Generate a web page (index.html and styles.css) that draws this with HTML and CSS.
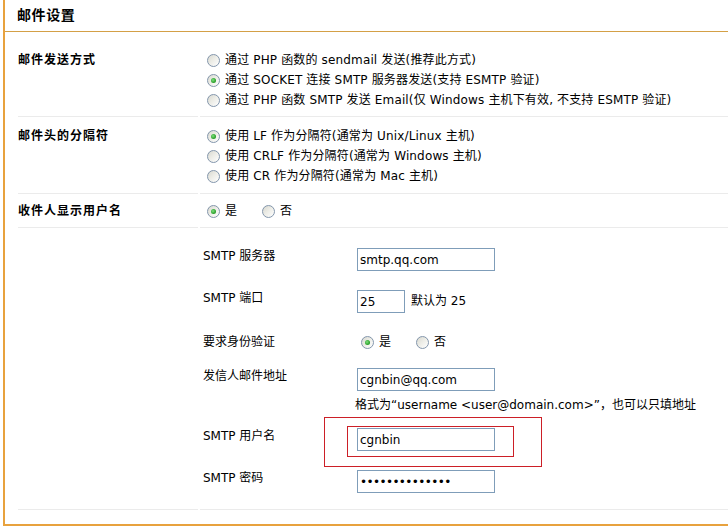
FILE: index.html
```html
<!DOCTYPE html>
<html lang="zh-CN">
<head>
<meta charset="utf-8">
<title>邮件设置</title>
<link rel="stylesheet" href="styles.css">
</head>
<body>
<div class="panel">
  <div class="panel-head">邮件设置</div>
  <div class="form">
    <div class="row row-1">
      <div class="lbl">邮件发送方式</div>
      <div class="ctl">
        <div class="opt wide"><span class="radio"></span>通过 PHP 函数的 sendmail 发送(推荐此方式)</div>
        <div class="opt wide"><span class="radio checked"></span>通过 SOCKET 连接 SMTP 服务器发送(支持 ESMTP 验证)</div>
        <div class="opt wide"><span class="radio"></span>通过 PHP 函数 SMTP 发送 Email(仅 Windows 主机下有效, 不支持 ESMTP 验证)</div>
      </div>
    </div>
    <div class="row row-2">
      <div class="lbl">邮件头的分隔符</div>
      <div class="ctl">
        <div class="opt wide"><span class="radio checked"></span>使用 LF 作为分隔符(通常为 Unix/Linux 主机)</div>
        <div class="opt wide"><span class="radio"></span>使用 CRLF 作为分隔符(通常为 Windows 主机)</div>
        <div class="opt wide"><span class="radio"></span>使用 CR 作为分隔符(通常为 Mac 主机)</div>
      </div>
    </div>
    <div class="row row-3">
      <div class="lbl">收件人显示用户名</div>
      <div class="ctl">
        <div class="opt choices">
          <span class="choice"><span class="radio checked"></span>是</span>
          <span class="choice"><span class="radio"></span>否</span>
        </div>
      </div>
    </div>
    <div class="row row-4">
      <div class="lbl"></div>
      <div class="ctl">
        <div class="subform">
          <div class="slbl">SMTP 服务器</div>
          <div class="sctl"><input class="field" type="text" value="smtp.qq.com"></div>

          <div class="slbl">SMTP 端口</div>
          <div class="sctl inline"><input class="field port" type="text" value="25"><span class="note">默认为 25</span></div>

          <div class="slbl">要求身份验证</div>
          <div class="sctl">
            <div class="opt choices">
              <span class="choice"><span class="radio checked"></span>是</span>
              <span class="choice"><span class="radio"></span>否</span>
            </div>
          </div>

          <div class="slbl">发信人邮件地址</div>
          <div class="sctl">
            <input class="field" type="text" value="cgnbin@qq.com">
            <div class="hint">格式为“username &lt;user@domain.com&gt;”，也可以只填地址</div>
          </div>

          <div class="slbl">SMTP 用户名</div>
          <div class="sctl marked">
            <input class="field" type="text" value="cgnbin">
            <span class="mark mark-outer"></span>
            <span class="mark mark-inner"></span>
          </div>

          <div class="slbl">SMTP 密码</div>
          <div class="sctl"><input class="field" type="password" value="abcdefghijklmn"></div>
        </div>
      </div>
    </div>
  </div>
</div>
</body>
</html>
```

FILE: styles.css
```css
html, body {
  margin: 0;
  padding: 0;
  background: #ffffff;
}

body {
  font-family: "DejaVu Sans", "Noto Sans CJK SC", sans-serif;
  font-size: 12px;
  color: #000000;
  overflow: hidden;
}

.panel {
  margin-left: 3px;
  border-left: 2px solid #e8a23e;
  border-bottom: 2px solid #e8a23e;
  padding-bottom: 14px;
}

.panel-head {
  height: 31px;
  line-height: 31px;
  padding-left: 12px;
  font-size: 14px;
  font-weight: bold;
  letter-spacing: 0.6px;
  border-bottom: 1px solid #d4a046;
}

.form {
  margin-top: 8px;
  padding-left: 13px;
}

.row {
  display: grid;
  grid-template-columns: 180px 1fr;
  column-gap: 2px;
}

.row > .lbl,
.row > .ctl {
  border-bottom: 1px solid #ebebeb;
}

.row-1 > .lbl, .row-1 > .ctl { padding-top: 10px; padding-bottom: 6px; }
.row-2 > .lbl, .row-2 > .ctl { padding-top: 9px; padding-bottom: 7px; }
.row-3 > .lbl, .row-3 > .ctl { padding-top: 7px; padding-bottom: 6px; }
.row-4 > .lbl, .row-4 > .ctl { padding-top: 18px; padding-bottom: 16px; }

.lbl {
  font-weight: bold;
  letter-spacing: 1px;
  line-height: 20px;
}

.ctl {
  padding-left: 3px;
}

.opt {
  display: flex;
  align-items: center;
  height: 20px;
  line-height: 20px;
  white-space: nowrap;
}

.opt.wide {
  letter-spacing: 0.15px;
}

.choices {
  gap: 21px;
}

.choice {
  display: inline-flex;
  align-items: center;
}

.radio {
  position: relative;
  flex: none;
  width: 11px;
  height: 11px;
  margin: 0 5px 0 4px;
  border: 1px solid #8396ac;
  border-radius: 50%;
  background: linear-gradient(135deg, #d8d8d0 0%, #ececE6 45%, #ffffff 100%);
}

.radio.checked::after {
  content: "";
  position: absolute;
  left: 3px;
  top: 3px;
  width: 5px;
  height: 5px;
  border-radius: 50%;
  background: radial-gradient(circle at 40% 40%, #7ee07e 0%, #2fa32f 60%, #1f861f 100%);
}

.subform {
  display: grid;
  grid-template-columns: 154px 1fr;
  grid-template-rows: 42px 44px 34px 60px 42px 25px;
}

.slbl {
  line-height: 20px;
  white-space: nowrap;
}

.sctl {
  position: relative;
}

.field {
  display: block;
  box-sizing: border-box;
  width: 138px;
  height: 23px;
  margin: 2px 0 0 0;
  padding: 0 2px;
  border: 1px solid #7f9db9;
  background: #ffffff;
  font-family: "DejaVu Sans", "Noto Sans CJK SC", sans-serif;
  font-size: 12px;
  color: #000000;
  outline: none;
}

.field[type="password"] {
  letter-spacing: -0.6px;
}

.inline {
  display: flex;
  align-items: flex-start;
}

.field.port {
  width: 48px;
}

.note {
  margin-left: 6px;
  margin-top: 2px;
  line-height: 23px;
}

.hint {
  margin-top: 4px;
  margin-left: -2px;
  line-height: 20px;
  white-space: nowrap;
}

.mark {
  position: absolute;
  box-sizing: border-box;
  border: 1px solid #cc1f27;
  pointer-events: none;
}

.mark-outer {
  left: -33px;
  top: -9px;
  width: 218px;
  height: 50px;
}

.mark-inner {
  left: -10px;
  top: 0;
  width: 167px;
  height: 31px;
}
```
